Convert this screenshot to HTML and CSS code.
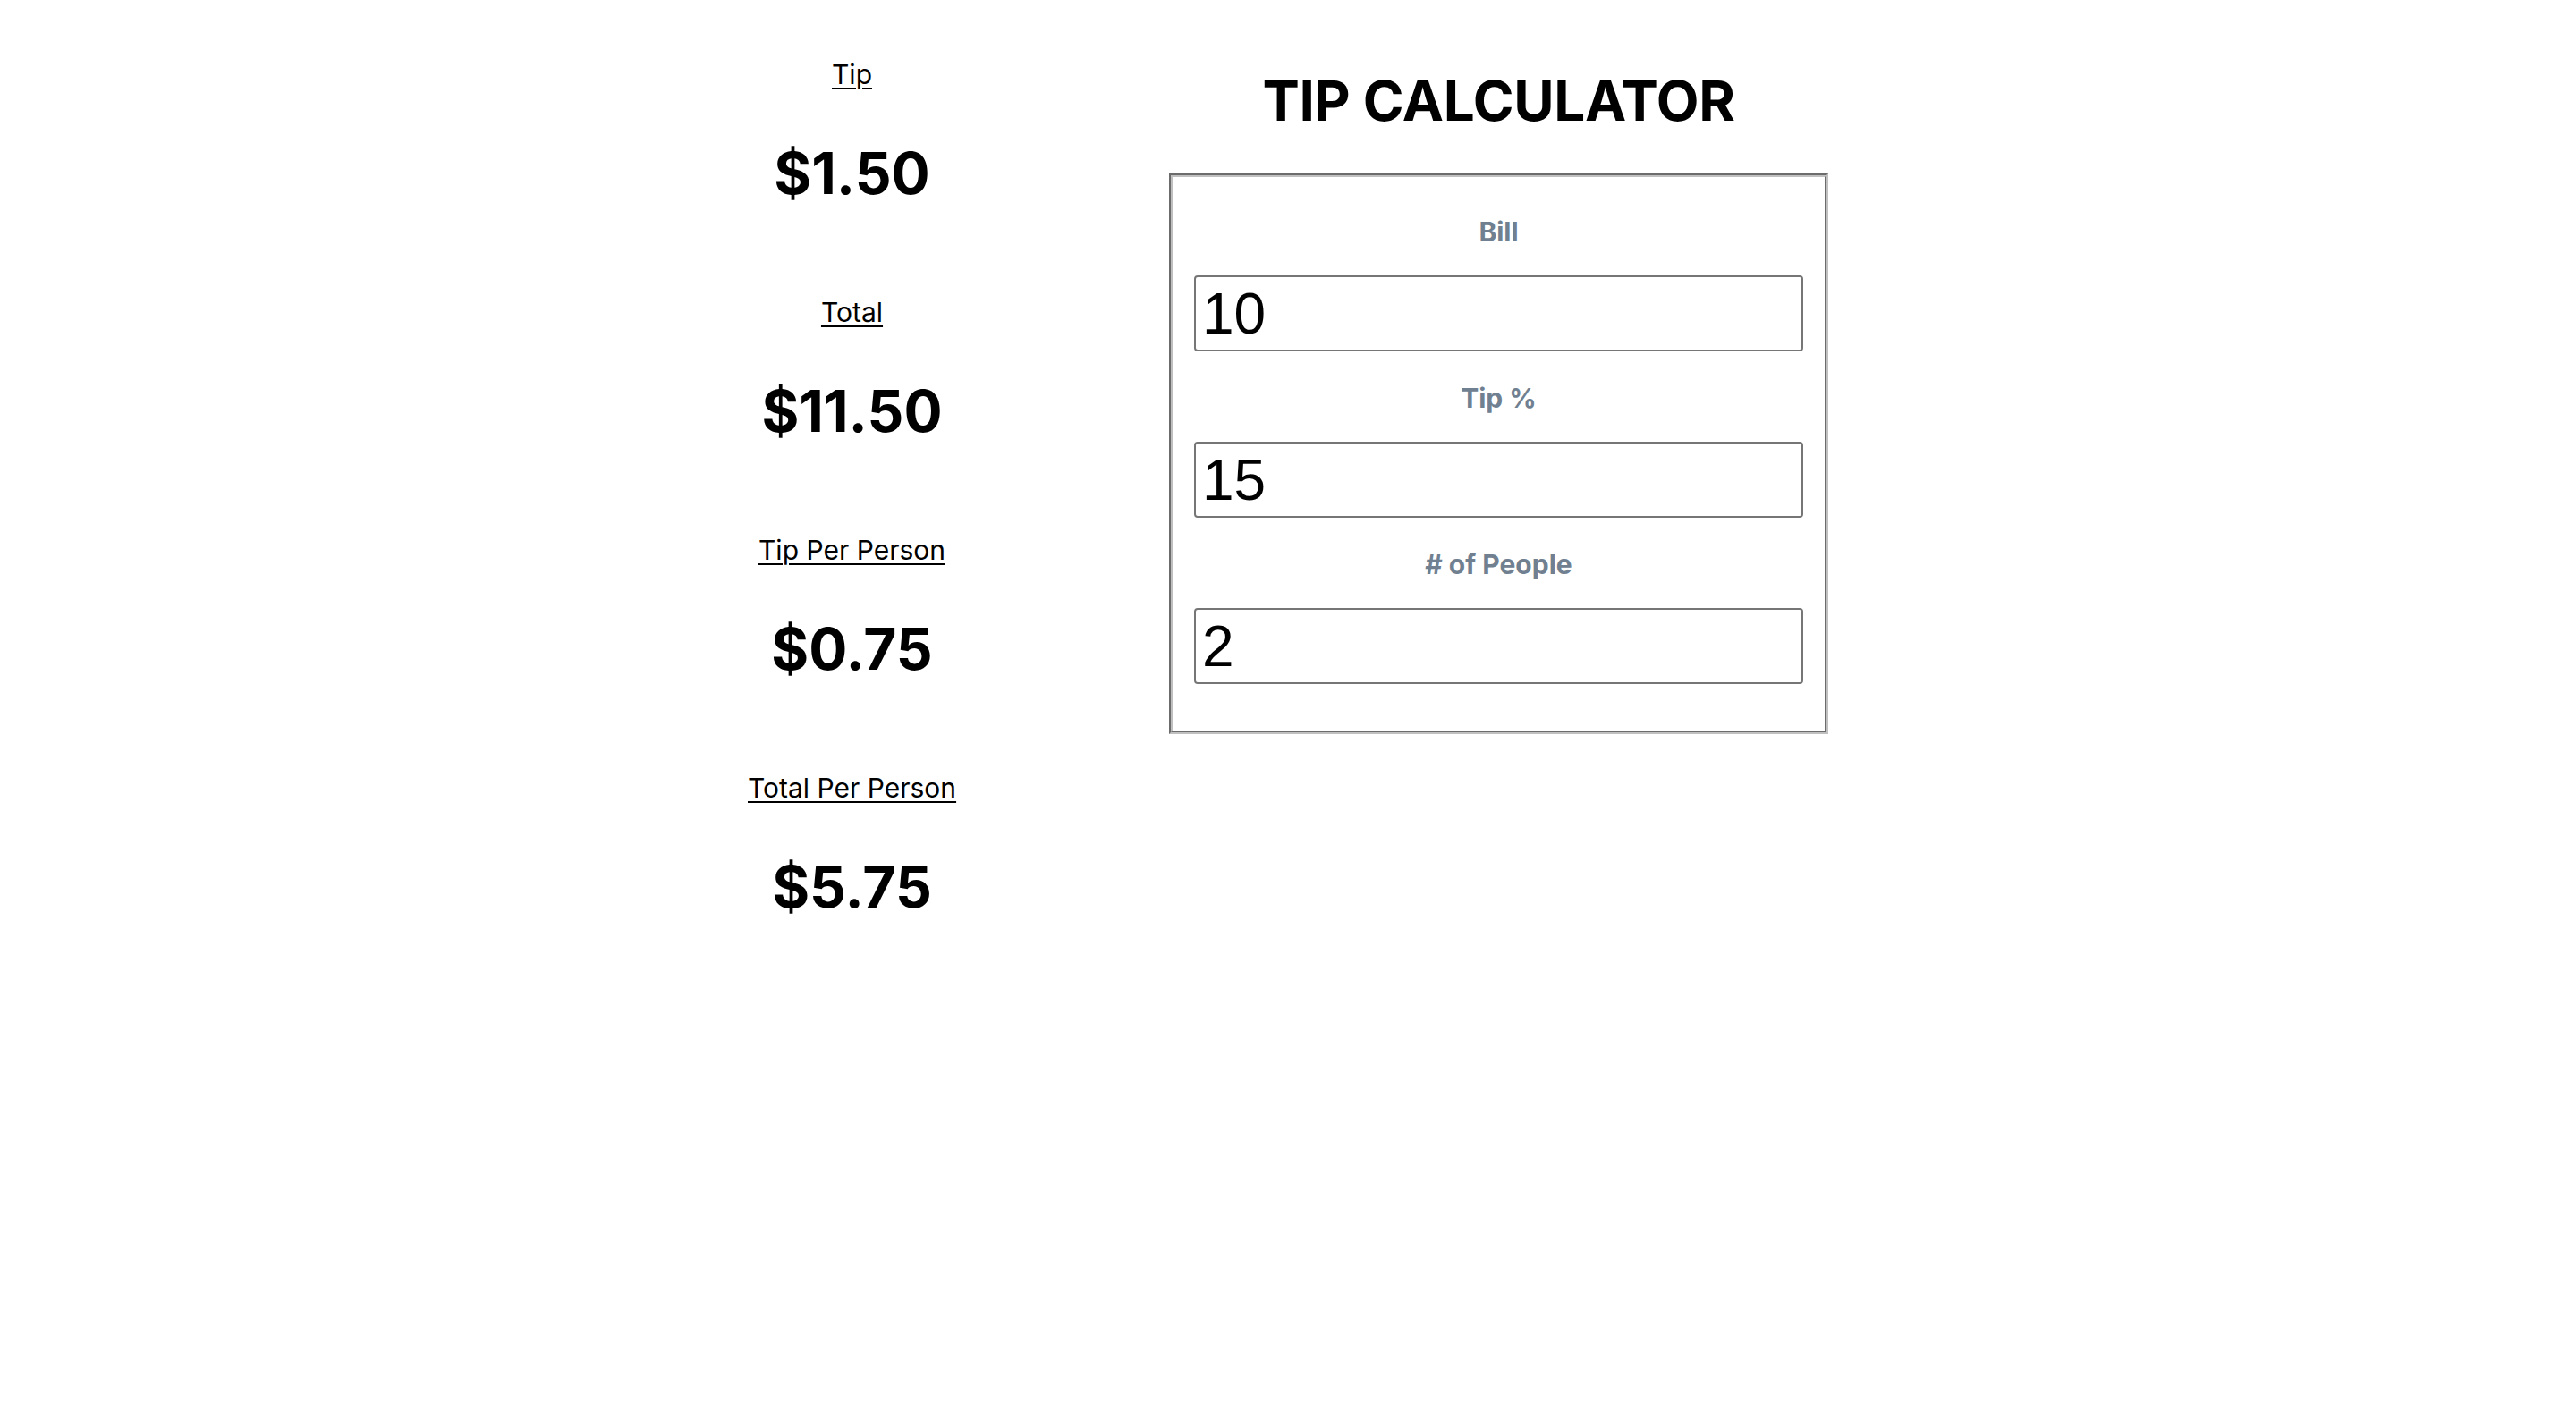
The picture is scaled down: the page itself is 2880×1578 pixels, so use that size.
FILE: index.html
```html
<!DOCTYPE html>
<html lang="en">
<head>
<meta charset="utf-8">
<title>Tip Calculator</title>
<link rel="stylesheet" href="styles.css">
</head>
<body>
<main class="app">
  <section class="results">
    <div class="result">
      <h3 class="result-label">Tip</h3>
      <h1 class="result-value">$1.50</h1>
    </div>
    <div class="result">
      <h3 class="result-label">Total</h3>
      <h1 class="result-value">$11.50</h1>
    </div>
    <div class="result">
      <h3 class="result-label">Tip Per Person</h3>
      <h1 class="result-value">$0.75</h1>
    </div>
    <div class="result">
      <h3 class="result-label">Total Per Person</h3>
      <h1 class="result-value">$5.75</h1>
    </div>
  </section>
  <section class="calculator">
    <h1 class="title">TIP CALCULATOR</h1>
    <fieldset class="form">
      <label class="field-label" for="bill">Bill</label>
      <input class="field-input" id="bill" type="text" inputmode="decimal" value="10">
      <label class="field-label" for="tip">Tip %</label>
      <input class="field-input" id="tip" type="text" inputmode="decimal" value="15">
      <label class="field-label" for="people"># of People</label>
      <input class="field-input" id="people" type="text" inputmode="numeric" value="2">
    </fieldset>
  </section>
</main>
</body>
</html>
```

FILE: styles.css
```css
html, body {
  margin: 0;
  padding: 0;
  background: #ffffff;
  color: #000000;
  font-family: Inter, "Noto Sans", "Liberation Sans", sans-serif;
}

.app {
  display: flex;
  justify-content: center;
  align-items: flex-start;
  gap: 238px;
}

.results {
  width: 233px;
  padding-top: 65px;
  display: flex;
  flex-direction: column;
  text-align: center;
}

.result + .result {
  margin-top: 98px;
}

.result-label {
  margin: 0;
  font-size: 30px;
  line-height: 36px;
  font-weight: 400;
  text-decoration: underline;
  text-decoration-thickness: 2px;
  text-underline-offset: 4px;
  white-space: nowrap;
}

.result-value {
  margin: 54px 0 0;
  font-size: 64px;
  line-height: 78px;
  font-weight: 700;
  white-space: nowrap;
}

.calculator {
  width: 737px;
  display: flex;
  flex-direction: column;
}

.title {
  margin: 77px 0 45px;
  font-size: 62px;
  line-height: 72px;
  font-weight: 700;
  text-align: center;
  letter-spacing: -0.3px;
}

.form {
  margin: 0;
  min-width: 0;
  box-sizing: border-box;
  width: 737px;
  border: 4px groove #c0c0c0;
  padding: 43px 24px 52px 24px;
  display: flex;
  flex-direction: column;
}

.field-label {
  display: block;
  margin: 34px 0 31px;
  font-size: 30px;
  line-height: 36px;
  font-weight: 700;
  color: #708090;
  text-align: center;
}

.field-label:first-child {
  margin-top: 0;
}

.field-input {
  display: block;
  box-sizing: border-box;
  width: 100%;
  height: 85px;
  margin: 0;
  padding: 0 7px;
  border: 2px solid #767676;
  border-radius: 4px;
  background: #ffffff;
  color: #000000;
  font-family: "Liberation Sans", Arial, sans-serif;
  font-size: 64px;
  outline: none;
}
```
